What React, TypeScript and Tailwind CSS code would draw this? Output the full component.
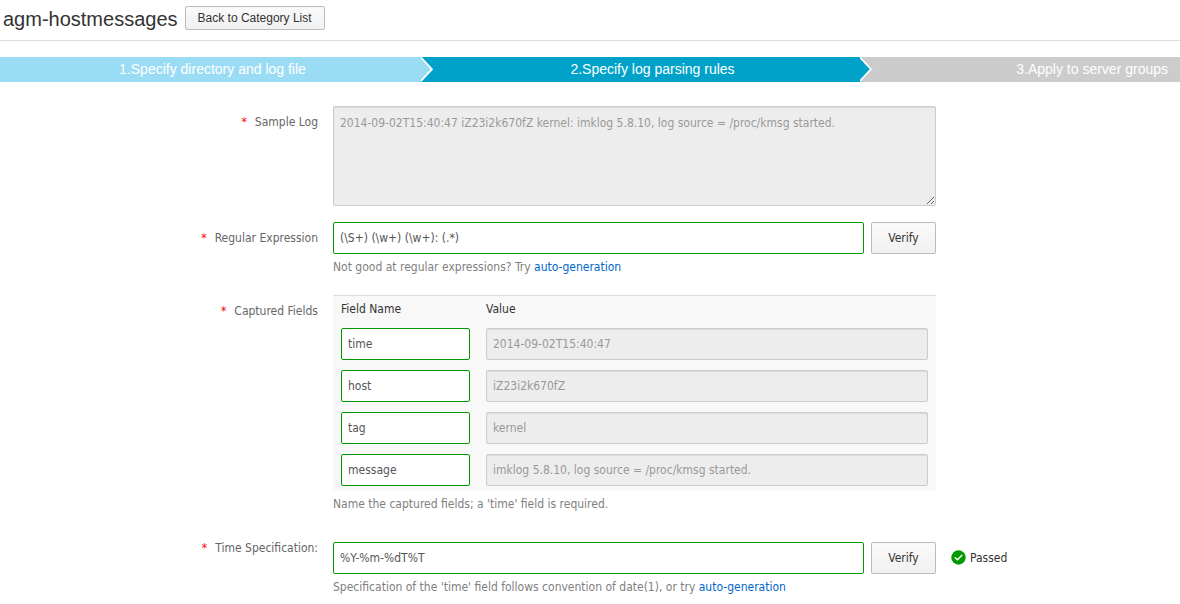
import { useState } from "react";
import type { ReactNode } from "react";

const capturedFields = [
  { name: "time", value: "2014-09-02T15:40:47" },
  { name: "host", value: "iZ23i2k670fZ" },
  { name: "tag", value: "kernel" },
  { name: "message", value: "imklog 5.8.10, log source = /proc/kmsg started." },
];

const inputBase = "block h-8 w-full rounded-xs border px-1.5 outline-none";
const validInput = `${inputBase} border-[#090] bg-white text-[#555]`;
const disabledInput = `${inputBase} border-[#ccc] bg-[#ededed] text-[#999] shadow-[inset_0_1px_1px_rgba(0,0,0,0.08)]`;

function Chevron({ className }: { className: string }) {
  return (
    <svg
      viewBox="0 0 13 25"
      className={`absolute top-0 left-full z-10 h-[25px] w-[13px] ${className}`}
      aria-hidden="true"
    >
      <path d="M0 0L11 12.5L0 25Z" fill="currentColor" />
      <path d="M0 0.5L11 12.2L0 24" fill="none" stroke="#fff" strokeWidth="1.7" />
    </svg>
  );
}

function FieldLabel({ htmlFor, children }: { htmlFor?: string; children: ReactNode }) {
  const content = (
    <>
      <span className="mr-2 text-[#f00]">*</span>
      {children}
    </>
  );
  const style = "block pt-[7px] text-right text-[#666]";
  return htmlFor ? (
    <label htmlFor={htmlFor} className={style}>
      {content}
    </label>
  ) : (
    <div className={style}>{content}</div>
  );
}

function Row({ children, className = "" }: { children: ReactNode; className?: string }) {
  return (
    <div className={`grid grid-cols-[318px_minmax(0,603px)_auto] gap-x-[15px] ${className}`}>
      {children}
    </div>
  );
}

function VerifyButton() {
  return (
    <button
      type="button"
      className="h-8 w-[65px] shrink-0 rounded-xs border border-[#bbb] bg-linear-to-b from-[#fafafa] to-[#f1f1f1] text-[#333]"
    >
      Verify
    </button>
  );
}

export default function App() {
  const [regex, setRegex] = useState("(\\S+) (\\w+) (\\w+): (.*)");
  const [timeFormat, setTimeFormat] = useState("%Y-%m-%dT%T");

  return (
    <div className="bg-white font-['DejaVu_Sans_Condensed','DejaVu_Sans',sans-serif] text-xs leading-[18px]">
      <header className="flex h-[41px] items-start gap-[7px] border-b border-[#ddd] pt-1.5 pl-[3px] font-['Liberation_Sans',Arial,sans-serif]">
        <h1 className="text-xl leading-[26px] text-[#333]">agm-hostmessages</h1>
        <button
          type="button"
          className="h-6 rounded-xs border border-[#bbb] bg-linear-to-b from-[#fafafa] to-[#f1f1f1] px-3 leading-none text-[#333]"
        >
          Back to Category List
        </button>
      </header>

      <ol className="mt-4 grid grid-cols-[421fr_439fr_320fr] font-['Liberation_Sans',Arial,sans-serif] text-sm leading-[25px] text-white">
        <li className="relative bg-[#9bdcf5] pl-1 text-center">
          1.Specify directory and log file
          <Chevron className="text-[#9bdcf5]" />
        </li>
        <li className="relative bg-[#00a2ca] pl-6 text-center">
          2.Specify log parsing rules
          <Chevron className="text-[#00a2ca]" />
        </li>
        <li className="bg-[#ccc] pr-3 text-right">3.Apply to server groups</li>
      </ol>

      <form className="pt-6" onSubmit={(e) => e.preventDefault()}>
        <Row>
          <FieldLabel htmlFor="sample-log">Sample Log</FieldLabel>
          <textarea
            id="sample-log"
            disabled
            defaultValue="2014-09-02T15:40:47 iZ23i2k670fZ kernel: imklog 5.8.10, log source = /proc/kmsg started."
            className="block h-[100px] w-full resize rounded-xs border border-[#ccc] bg-[#ededed] px-1.5 py-[7px] text-[#999] shadow-[inset_0_1px_1px_rgba(0,0,0,0.08)]"
          />
        </Row>

        <Row className="mt-4">
          <FieldLabel htmlFor="regex">Regular Expression</FieldLabel>
          <div>
            <div className="flex gap-[7px]">
              <input
                id="regex"
                value={regex}
                onChange={(e) => setRegex(e.target.value)}
                className={validInput}
              />
              <VerifyButton />
            </div>
            <p className="mt-1 text-[#808080]">
              Not good at regular expressions? Try{" "}
              <a href="#auto-regex" className="text-[#06c]">
                auto-generation
              </a>
            </p>
          </div>
        </Row>

        <Row className="mt-[19px]">
          <FieldLabel>Captured Fields</FieldLabel>
          <div>
            <table className="w-full table-fixed border-t border-[#ddd] bg-[#f8f8f8] text-left">
              <thead>
                <tr className="h-[27px] text-[#333]">
                  <th className="w-[145px] pl-2 font-normal">Field Name</th>
                  <th className="pl-2 font-normal">Value</th>
                </tr>
              </thead>
              <tbody>
                {capturedFields.map((field) => (
                  <tr key={field.name}>
                    <td className="py-[5px] pr-2 pl-2">
                      <input
                        aria-label="Field Name"
                        defaultValue={field.name}
                        className={validInput}
                      />
                    </td>
                    <td className="py-[5px] pr-2 pl-2">
                      <input
                        aria-label={`Value of ${field.name}`}
                        disabled
                        defaultValue={field.value}
                        className={disabledInput}
                      />
                    </td>
                  </tr>
                ))}
              </tbody>
            </table>
            <p className="mt-1 text-[#808080]">
              Name the captured fields; a 'time' field is required.
            </p>
          </div>
        </Row>

        <Row className="mt-[19px]">
          <FieldLabel htmlFor="time-spec">Time Specification:</FieldLabel>
          <div className="pt-2.5">
            <div className="flex gap-[7px]">
              <input
                id="time-spec"
                value={timeFormat}
                onChange={(e) => setTimeFormat(e.target.value)}
                className={validInput}
              />
              <VerifyButton />
            </div>
            <p className="mt-1 text-[#808080]">
              Specification of the 'time' field follows convention of date(1), or try{" "}
              <a href="#auto-time" className="text-[#06c]">
                auto-generation
              </a>
            </p>
          </div>
          <div className="mt-2.5 flex h-8 items-center gap-1 text-[#333]" role="status">
            <svg viewBox="0 0 15 15" className="size-[15px]" aria-hidden="true">
              <circle cx="7.5" cy="7.5" r="7.2" fill="#090" />
              <path d="M3.8 7.3L6.4 9.8L11.2 5" fill="none" stroke="#fff" strokeWidth="1.5" />
            </svg>
            Passed
          </div>
        </Row>
      </form>
    </div>
  );
}
